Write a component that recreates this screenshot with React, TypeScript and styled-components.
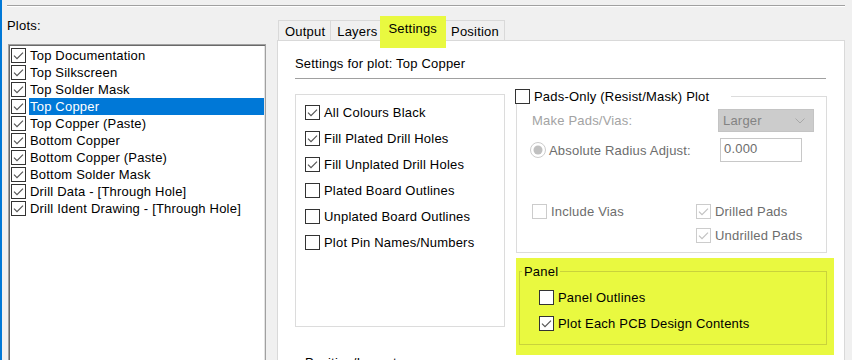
import React from "react";
import styled, { createGlobalStyle } from "styled-components";

const GlobalStyle = createGlobalStyle`
    html, body {
        margin: 0;
        padding: 0;
        background: #f0f0f0;
    }

    body {
        font-family: "Liberation Sans", Arial, sans-serif;
        font-size: 13px;
        letter-spacing: 0.2px;
        color: #000;
    }
`;

const plots = [
    "Top Documentation",
    "Top Silkscreen",
    "Top Solder Mask",
    "Top Copper",
    "Top Copper (Paste)",
    "Bottom Copper",
    "Bottom Copper (Paste)",
    "Bottom Solder Mask",
    "Drill Data - [Through Hole]",
    "Drill Ident Drawing - [Through Hole]",
];

const options = [
    { label: "All Colours Black", checked: true },
    { label: "Fill Plated Drill Holes", checked: true },
    { label: "Fill Unplated Drill Holes", checked: true },
    { label: "Plated Board Outlines", checked: false },
    { label: "Unplated Board Outlines", checked: false },
    { label: "Plot Pin Names/Numbers", checked: false },
];

const tabs = ["Output", "Layers", "Settings", "Position"];

const CheckBox = ({ checked, disabled }: { checked?: boolean; disabled?: boolean }) => (
    <Box width="15" height="15" viewBox="0 0 15 15">
        <rect x="0.5" y="0.5" width="14" height="14" fill="#fff" stroke={disabled ? "#cccccc" : "#333333"} />
        {checked && (
            <path d="M3 7.6l3 3 6-6" fill="none" stroke={disabled ? "#c2c2c2" : "#555555"} strokeWidth="1.2" />
        )}
    </Box>
);

const Radio = () => (
    <Box width="16" height="16" viewBox="0 0 16 16">
        <circle cx="8" cy="8" r="7.5" fill="#fff" stroke="#cccccc" />
        <circle cx="8" cy="8" r="4.5" fill="#c0c0c0" />
    </Box>
);

const App = () => {
    return (
        <Window>
            <GlobalStyle />
            <EtchedRule />

            <Main>
                <Plots.Column>
                    <Plots.Label>Plots:</Plots.Label>
                    <Plots.List>
                        {plots.map((name) => (
                            <Plots.Row key={name}>
                                <CheckBox checked />
                                <Plots.Name selected={name === "Top Copper"}>{name}</Plots.Name>
                            </Plots.Row>
                        ))}
                    </Plots.List>
                </Plots.Column>

                <Tabs.Control>
                    <Tabs.Strip>
                        {tabs.map((tab) => (
                            <Tabs.Tab key={tab} active={tab === "Settings"}>
                                {tab}
                            </Tabs.Tab>
                        ))}
                    </Tabs.Strip>

                    <Tabs.Panel>
                        <Settings.Title>Settings for plot: Top Copper</Settings.Title>
                        <Settings.Rule />

                        <Settings.Columns>
                            <Settings.OptionsGroup>
                                {options.map((opt) => (
                                    <CheckRow key={opt.label}>
                                        <CheckBox checked={opt.checked} />
                                        <span>{opt.label}</span>
                                    </CheckRow>
                                ))}
                            </Settings.OptionsGroup>

                            <Settings.RightColumn>
                                <Pads.Group>
                                    <Pads.Legend>
                                        <CheckRow>
                                            <CheckBox />
                                            <span>Pads-Only (Resist/Mask) Plot</span>
                                        </CheckRow>
                                    </Pads.Legend>

                                    <Pads.Body>
                                        <Pads.Line>
                                            <Pads.FieldLabel>Make Pads/Vias:</Pads.FieldLabel>
                                            <Pads.Select>
                                                <span>Larger</span>
                                                <svg width="10" height="6" viewBox="0 0 10 6">
                                                    <path d="M0.5 0.5l4.5 4.5 4.5-4.5" fill="none" stroke="#a8a8a8" />
                                                </svg>
                                            </Pads.Select>
                                        </Pads.Line>

                                        <Pads.Line gap={6}>
                                            <Pads.RadioLabel>
                                                <Radio />
                                                <span>Absolute Radius Adjust:</span>
                                            </Pads.RadioLabel>
                                            <Pads.Input>0.000</Pads.Input>
                                        </Pads.Line>

                                        <Pads.CheckGrid>
                                            <CheckRow muted>
                                                <CheckBox disabled />
                                                <span>Include Vias</span>
                                            </CheckRow>
                                            <CheckRow muted>
                                                <CheckBox disabled checked />
                                                <span>Drilled Pads</span>
                                            </CheckRow>
                                            <span />
                                            <CheckRow muted>
                                                <CheckBox disabled checked />
                                                <span>Undrilled Pads</span>
                                            </CheckRow>
                                        </Pads.CheckGrid>
                                    </Pads.Body>
                                </Pads.Group>

                                <Panel.Highlight>
                                    <Panel.Group>
                                        <Panel.Legend>Panel</Panel.Legend>
                                        <Panel.Body>
                                            <CheckRow>
                                                <CheckBox />
                                                <span>Panel Outlines</span>
                                            </CheckRow>
                                            <CheckRow>
                                                <CheckBox checked />
                                                <span>Plot Each PCB Design Contents</span>
                                            </CheckRow>
                                        </Panel.Body>
                                    </Panel.Group>
                                </Panel.Highlight>
                            </Settings.RightColumn>
                        </Settings.Columns>

                        <Settings.SubHeading>Position/Layout</Settings.SubHeading>
                    </Tabs.Panel>
                </Tabs.Control>
            </Main>
        </Window>
    );
};

export default App;


const Window = styled.div`
    width: 852px;
    height: 360px;
    box-sizing: border-box;

    border-left: 2px solid #0078d7;
    padding: 5px 7px 0 5px;

    background: #f0f0f0;
    overflow: hidden;
`;

const EtchedRule = styled.div`
    border-top: 1px solid #a0a0a0;
    border-bottom: 1px solid #fff;
`;

const Main = styled.div`
    display: flex;
    gap: 11px;
`;

const Box = styled.svg`
    display: block;
    flex: none;
`;

const CheckRow = styled.label<{ muted?: boolean }>`
    display: flex;
    align-items: center;
    gap: 4px;

    height: 15px;
    line-height: 15px;
    white-space: nowrap;

    color: ${(props) => (props.muted ? "#6d6d6d" : "#000")};
`;

const Plots = {
    Column: styled.div`
        width: 259px;
        flex: none;
    `,

    Label: styled.div`
        margin-top: 11px;
        line-height: 15px;
    `,

    List: styled.div`
        margin: 11px 0 0 1px;
        width: 258px;
        height: 330px;
        box-sizing: border-box;

        border: 1px solid #a0a0a0;
        box-shadow: inset 1px 1px 0 #696969, inset -1px -1px 0 #e3e3e3;
        padding: 2px 1px 0 2px;

        background: #fff;
    `,

    Row: styled.div`
        display: flex;
        align-items: center;

        height: 17px;
    `,

    Name: styled.span<{ selected?: boolean }>`
        flex: 1;

        margin-left: 3px;
        padding: 0 1px;

        height: 17px;
        line-height: 17px;
        white-space: nowrap;

        background: ${(props) => (props.selected ? "#0078d7" : "transparent")};
        color: ${(props) => (props.selected ? "#fff" : "#000")};
    `,
};

const Tabs = {
    Control: styled.div`
        width: 568px;
        flex: none;

        padding-top: 9px;
    `,

    Strip: styled.div`
        position: relative;
        z-index: 1;

        display: flex;
        align-items: flex-end;

        height: 25px;
        padding-left: 1px;
    `,

    Tab: styled.div<{ active?: boolean }>`
        position: relative;
        z-index: ${(props) => (props.active ? 2 : 0)};

        box-sizing: border-box;
        height: ${(props) => (props.active ? "25px" : "21px")};
        margin: ${(props) => (props.active ? "0 -1px 0 -2px" : "0 -1px 0 0")};
        padding: ${(props) => (props.active ? "4px 7px 0" : "3px 5px 0 6px")};

        border: 1px solid #d9d9d9;
        border-bottom: ${(props) => (props.active ? "none" : "1px solid #d9d9d9")};

        background: ${(props) => (props.active ? "#fff" : "#f0f0f0")};
        line-height: 15px;
        white-space: nowrap;

        &::before {
            content: "";
            display: ${(props) => (props.active ? "block" : "none")};
            position: absolute;
            z-index: -1;
            top: -1px;
            left: -1px;

            width: 66px;
            height: 32px;

            background: #e9f940;
        }
    `,

    Panel: styled.div`
        margin-top: -1px;
        height: 330px;
        box-sizing: border-box;

        border: 1px solid #d9d9d9;
        padding: 15px 17px 0;

        background: #fff;
    `,
};

const Settings = {
    Title: styled.div`
        line-height: 15px;
    `,

    Rule: styled.div`
        margin-top: 7px;
        margin-right: 1px;

        border-top: 1px solid #a0a0a0;
        border-bottom: 1px solid #fff;
    `,

    Columns: styled.div`
        display: flex;
        align-items: flex-start;
        gap: 10px;

        margin-top: 9px;
    `,

    OptionsGroup: styled.div`
        width: 210px;
        height: 233px;
        box-sizing: border-box;
        flex: none;

        margin-top: 5px;
        border: 1px solid #dcdcdc;
        padding: 10px 0 0 9px;

        display: flex;
        flex-direction: column;
        gap: 11px;
    `,

    RightColumn: styled.div`
        width: 320px;
        flex: none;

        display: flex;
        flex-direction: column;
    `,

    SubHeading: styled.div`
        margin-top: 0;
        padding-left: 10px;

        line-height: 15px;
    `,
};

const Pads = {
    Group: styled.fieldset`
        width: 311px;
        min-width: 0;
        box-sizing: border-box;

        margin: 0 0 0 1px;
        padding: 0;

        border: 1px solid #dcdcdc;
    `,

    Legend: styled.legend`
        margin-left: -2px;
        padding: 0 22px 0 0;
    `,

    Body: styled.div`
        padding: 5px 0 9px 15px;
    `,

    Line: styled.div<{ gap?: number }>`
        display: flex;
        align-items: center;

        margin-top: ${(props) => props.gap ?? 0}px;
    `,

    FieldLabel: styled.span`
        width: 186px;
        flex: none;

        color: #a3a3a3;
    `,

    Select: styled.div`
        width: 96px;
        height: 23px;
        box-sizing: border-box;

        display: flex;
        align-items: center;
        justify-content: space-between;

        border: 1px solid #c4c4c4;
        padding: 0 8px 0 4px;

        background: #cccccc;
        color: #838383;
    `,

    RadioLabel: styled.label`
        width: 190px;
        flex: none;

        display: flex;
        align-items: center;
        gap: 3px;

        margin-left: -2px;
        color: #6d6d6d;
    `,

    Input: styled.div`
        width: 82px;
        height: 24px;
        box-sizing: border-box;

        border: 1px solid #c8c8c8;
        padding: 2px 3px 0;

        line-height: 15px;
        color: #6d6d6d;
    `,

    CheckGrid: styled.div`
        display: grid;
        grid-template-columns: 164px auto;
        row-gap: 9px;

        margin-top: 42px;
    `,
};

const Panel = {
    Highlight: styled.div`
        width: 318px;
        height: 97px;
        box-sizing: border-box;

        margin: 5px 0 0 1px;
        padding: 6px 7px 0 3px;

        background: #e9f940;
    `,

    Group: styled.fieldset`
        min-width: 0;
        margin: 0;
        padding: 0;

        border: 1px solid #c9d23c;
    `,

    Legend: styled.legend`
        margin-left: 2px;
        padding: 0 2px;

        line-height: 15px;
    `,

    Body: styled.div`
        display: flex;
        flex-direction: column;
        gap: 11px;

        padding: 11px 0 13px 19px;
    `,
};
